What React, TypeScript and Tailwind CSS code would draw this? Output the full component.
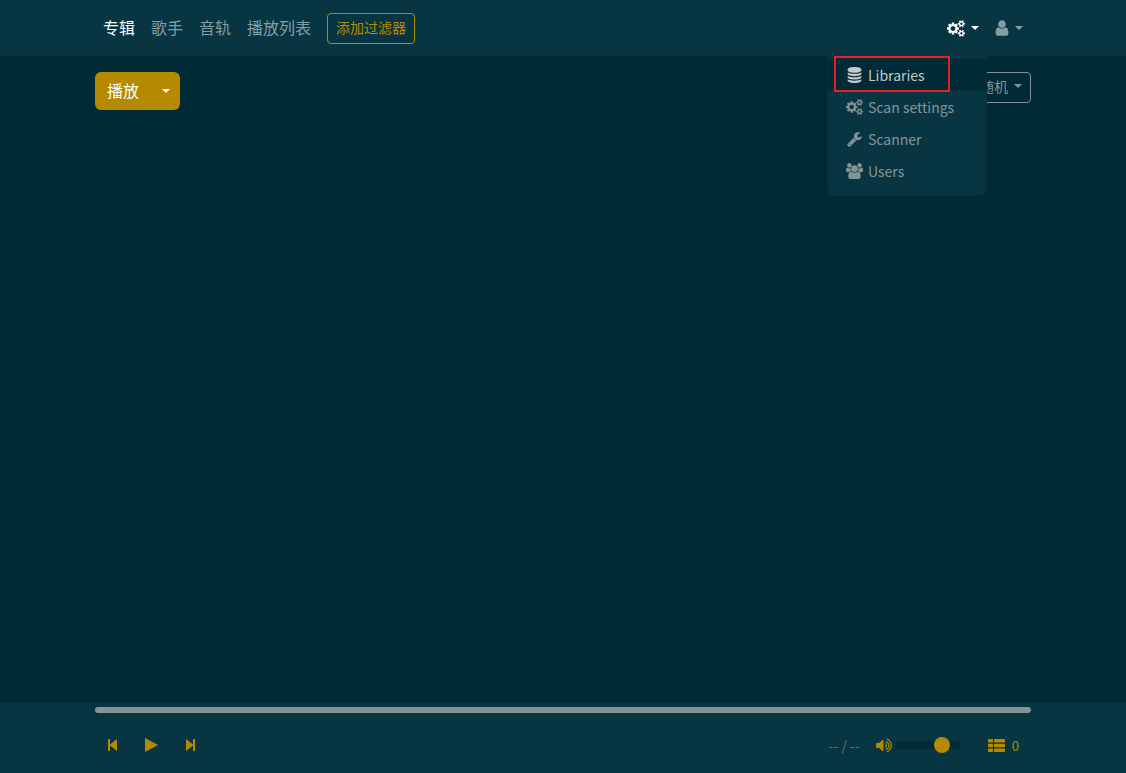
import React from "react";

type IconProps = { className?: string };

const COGS =
  "M896 896q0-106-75-181t-181-75-181 75-75 181 75 181 181 75 181-75 75-181zm768 512q0-52-38-90t-90-38-90 38-38 90q0 53 37.5 90.5t90.5 37.5 90.5-37.5 37.5-90.5zm0-1024q0-52-38-90t-90-38-90 38-38 90q0 53 37.5 90.5t90.5 37.5 90.5-37.5 37.5-90.5zm-384 421v185q0 10-7 19.5t-16 10.5l-155 24q-11 35-32 76 34 48 90 115 7 11 7 20 0 12-7 19-23 30-82.5 89.5t-78.5 59.5q-11 0-21-7l-115-90q-37 19-77 31-11 108-23 155-7 24-30 24h-186q-11 0-20-7.5t-10-17.5l-23-153q-34-10-75-31l-118 89q-7 7-20 7-11 0-21-8-144-133-144-160 0-9 7-19 10-14 41-53t47-61q-23-44-35-82l-152-24q-10-1-17-9.5t-7-19.5v-185q0-10 7-19.5t16-10.5l155-24q11-35 32-76-34-48-90-115-7-11-7-20 0-12 7-20 22-30 82-89t79-59q11 0 21 7l115 90q34-18 77-32 11-108 23-154 7-24 30-24h186q11 0 20 7.5t10 17.5l23 153q34 10 75 31l118-89q8-7 20-7 11 0 21 8 144 133 144 160 0 8-7 19-12 16-42 54t-45 60q23 48 34 82l152 23q10 2 17 10.5t7 19.5zm640 533v140q0 16-149 31-12 27-30 52 51 113 51 138 0 4-4 7-122 71-124 71-8 0-46-47t-52-68q-20 2-30 2t-30-2q-14 21-52 68t-46 47q-2 0-124-71-4-3-4-7 0-25 51-138-18-25-30-52-149-15-149-31v-140q0-16 149-31 13-29 30-52-51-113-51-138 0-4 4-7 4-2 35-20t59-34 30-16q8 0 46 46.5t52 67.5q20-2 30-2t30 2q51-71 92-112l6-2q4 0 124 70 4 3 4 7 0 25-51 138 17 23 30 52 149 15 149 31zm0-1024v140q0 16-149 31-12 27-30 52 51 113 51 138 0 4-4 7-122 71-124 71-8 0-46-47t-52-68q-20 2-30 2t-30-2q-14 21-52 68t-46 47q-2 0-124-71-4-3-4-7 0-25 51-138-18-25-30-52-149-15-149-31v-140q0-16 149-31 13-29 30-52-51-113-51-138 0-4 4-7 4-2 35-20t59-34 30-16q8 0 46 46.5t52 67.5q20-2 30-2t30 2q51-71 92-112l6-2q4 0 124 70 4 3 4 7 0 25-51 138 17 23 30 52 149 15 149 31z";
const DATABASE =
  "M768 768q237 0 443-43t325-127v170q0 69-103 128t-280 93.5-385 34.5-385-34.5-280-93.5-103-128v-170q119 84 325 127t443 43zm0 768q237 0 443-43t325-127v170q0 69-103 128t-280 93.5-385 34.5-385-34.5-280-93.5-103-128v-170q119 84 325 127t443 43zm0-384q237 0 443-43t325-127v170q0 69-103 128t-280 93.5-385 34.5-385-34.5-280-93.5-103-128v-170q119 84 325 127t443 43zm0-1152q208 0 385 34.5t280 93.5 103 128v128q0 69-103 128t-280 93.5-385 34.5-385-34.5-280-93.5-103-128v-128q0-69 103-128t280-93.5 385-34.5z";
const WRENCH =
  "M448 1472q0-26-19-45t-45-19-45 19-19 45 19 45 45 19 45-19 19-45zm644-420l-682 682q-37 37-90 37-52 0-91-37l-106-108q-38-36-38-90 0-53 38-91l681-681q39 98 114.5 173.5t173.5 114.5zm634-435q0 39-23 106-47 134-164.5 217.5t-258.5 83.5q-185 0-316.5-131.5t-131.5-316.5 131.5-316.5 316.5-131.5q58 0 121.5 16.5t107.5 46.5q16 11 16 28t-16 28l-293 169v224l193 107q5-3 79-48.5t135.5-81 70.5-35.5q15 0 23.5 10t8.5 25z";
const USERS =
  "M657 896q-162 5-265 128h-134q-82 0-138-40.5t-56-118.5q0-353 124-353 6 0 43.5 21t97.5 42.5 119 21.5q67 0 133-23-5 37-5 66 0 159 93 256zm1071 637q0 120-73 189.5t-194 69.5h-874q-121 0-194-69.5t-73-189.5q0-53 3.5-103.5t14-109 26.5-108.5 43-97.5 62-81 85.5-53.5 111.5-20q10 0 43 21.5t73 48 107 48 135 21.5 135-21.5 107-48 73-48 43-21.5q61 0 111.5 20t85.5 53.5 62 81 43 97.5 26.5 108.5 14 109 3.5 103.5zm-1024-1277q0 106-75 181t-181 75-181-75-75-181 75-181 181-75 181 75 75 181zm704 384q0 159-112.5 271.5t-271.5 112.5-271.5-112.5-112.5-271.5 112.5-271.5 271.5-112.5 271.5 112.5 112.5 271.5zm576 225q0 78-56 118.5t-138 40.5h-134q-103-123-265-128 93-97 93-256 0-29-5-66 66 23 133 23 59 0 119-21.5t97.5-42.5 43.5-21q124 0 124 353zm-128-609q0 106-75 181t-181 75-181-75-75-181 75-181 181-75 181 75 75 181z";
const USER =
  "M1536 1399q0 109-62.5 187t-150.5 78h-854q-88 0-150.5-78t-62.5-187q0-85 8.5-160.5t31.5-152 58.5-131 94-89 134.5-34.5q131 128 313 128t313-128q76 0 134.5 34.5t94 89 58.5 131 31.5 152 8.5 160.5zm-256-887q0 159-112.5 271.5t-271.5 112.5-271.5-112.5-112.5-271.5 112.5-271.5 271.5-112.5 271.5 112.5 112.5 271.5z";
const VOLUME =
  "M832 352v1088q0 26-19 45t-45 19-45-19l-333-333h-262q-26 0-45-19t-19-45v-384q0-26 19-45t45-19h262l333-333q19-19 45-19t45 19 19 45zm384 544q0 76-42.5 141.5t-112.5 93.5q-10 5-25 5-26 0-45-18.5t-19-45.5q0-21 12-35.5t29-25 34-23 29-35.5 12-57-12-57-29-35.5-34-23-29-25-12-35.5q0-27 19-45.5t45-18.5q15 0 25 5 70 27 112.5 93t42.5 142zm256 0q0 153-85 282.5t-225 188.5q-13 5-25 5-27 0-46-19t-19-45q0-39 39-59 56-29 76-44 74-54 115.5-135.5t41.5-173.5-41.5-173.5-115.5-135.5q-20-15-76-44-39-20-39-59 0-26 19-45t45-19q13 0 26 5 140 59 225 188.5t85 282.5zm256 0q0 230-127 422.5t-338 283.5q-13 5-26 5-26 0-45-19t-19-45q0-36 39-59 7-4 22.5-10.5t22.5-10.5q46-25 82-51 123-91 192-227t69-289-69-289-192-227q-36-26-82-51-7-4-22.5-10.5t-22.5-10.5q-39-23-39-59 0-26 19-45t45-19q13 0 26 5 211 91 338 283.5t127 422.5z";

function Glyph({ d, viewBox, className = "" }: { d: string; viewBox: string } & IconProps) {
  return (
    <svg viewBox={viewBox} fill="currentColor" aria-hidden="true" className={`shrink-0 ${className}`}>
      <path d={d} />
    </svg>
  );
}

function Caret() {
  return (
    <svg viewBox="0 0 8 4" fill="currentColor" aria-hidden="true" className="h-1 w-2 shrink-0">
      <path d="M0 0h8L4 4z" />
    </svg>
  );
}

const navItems = ["专辑", "歌手", "音轨", "播放列表"];

const adminItems = [
  { label: "Libraries", d: DATABASE, viewBox: "0 0 1536 1792", size: "h-4 w-[15px]" },
  { label: "Scan settings", d: COGS, viewBox: "0 0 1920 1792", size: "h-4 w-[17px]" },
  { label: "Scanner", d: WRENCH, viewBox: "64 0 1664 1792", size: "h-4 w-[15px]" },
  { label: "Users", d: USERS, viewBox: "64 0 1920 1792", size: "h-4 w-[17px]" },
];

function AdminMenu() {
  return (
    <div className="absolute right-px top-full z-10 w-[158px] rounded-md bg-[#073642] py-2 text-[#839496] ring-1 ring-[#05303b]">
      <ul>
        {adminItems.map((item, i) => (
          <li key={item.label}>
            <a
              href="#"
              className={`flex h-8 items-center gap-1 pl-4 text-sm ${i === 0 ? "bg-[#002b36] text-[#c1c9ca]" : ""}`}
            >
              <span className="flex w-5 justify-center">
                <Glyph d={item.d} viewBox={item.viewBox} className={item.size} />
              </span>
              {item.label}
            </a>
          </li>
        ))}
      </ul>
      <div className="pointer-events-none absolute left-1.5 top-[5px] h-9 w-[116px] border-2 border-[#ed1c24]" />
    </div>
  );
}

function Header() {
  return (
    <header className="bg-[#073642]">
      <div className="mx-auto flex h-14 max-w-[960px] items-center justify-between px-3">
        <nav className="flex items-center text-base">
          {navItems.map((item, i) => (
            <a key={item} href="#" className={`px-2 pb-0.5 ${i === 0 ? "text-white" : "text-[#839fa5]"}`}>
              {item}
            </a>
          ))}
          <button
            type="button"
            className="ml-2 h-[31px] rounded border border-[#b58900] px-2 pb-0.5 text-sm text-[#b58900]"
          >
            添加过滤器
          </button>
        </nav>
        <div className="flex items-center">
          <div className="relative">
            <button type="button" aria-label="Administration" className="flex h-[46px] items-center gap-1.5 px-2 text-white">
              <Glyph d={COGS} viewBox="0 0 1920 1792" className="h-[17px] w-[18px]" />
              <Caret />
            </button>
            <AdminMenu />
          </div>
          <button type="button" aria-label="Account" className="flex h-10 items-center gap-1.5 px-2 text-[#839fa5]">
            <Glyph d={USER} viewBox="256 0 1280 1792" className="h-[18px] w-[14px]" />
            <Caret />
          </button>
        </div>
      </div>
    </header>
  );
}

function Toolbar() {
  return (
    <div className="flex items-start justify-between">
      <div className="flex h-[38px] overflow-hidden rounded-md bg-[#b58900] text-white">
        <button type="button" className="px-3 pb-0.5 text-base">
          播放
        </button>
        <button type="button" aria-label="更多播放选项" className="pl-[11px] pr-[10px]">
          <Caret />
        </button>
      </div>
      <button
        type="button"
        className="flex h-[31px] items-center gap-1.5 rounded border border-[#839496] px-2 text-sm text-[#839496]"
      >
        <span className="pb-1">随机</span>
        <span className="pb-1">
          <Caret />
        </span>
      </button>
    </div>
  );
}

function Player() {
  return (
    <footer className="bg-[#073642]">
      <div className="mx-auto max-w-[960px] px-3 pt-1">
        <input
          type="range"
          aria-label="Seek"
          defaultValue={0}
          disabled
          className="block h-1.5 w-full appearance-none rounded-full bg-[#839496] [&::-webkit-slider-thumb]:h-0 [&::-webkit-slider-thumb]:w-0 [&::-webkit-slider-thumb]:appearance-none"
        />
        <div className="flex h-[60px] items-center justify-between px-3 pt-1 text-[#b58900]">
          <div className="flex items-center">
            <button type="button" aria-label="Previous" className="w-7">
              <svg viewBox="-1 0 10 12" fill="currentColor" className="h-3 w-[10px]">
                <path d="M0 0h2v5.4L8.6.2Q9 0 9 .5v11q0 .5-.4.3L2 6.600V12H0z" />
              </svg>
            </button>
            <button type="button" aria-label="Play" className="w-10 pl-2.5">
              <svg viewBox="0 0 13 14" fill="currentColor" className="h-3.5 w-[13px]">
                <path d="M0 .5Q0-.1.5.2L12.600 6.700q.5.3 0 .6L.5 13.800Q0 14.100 0 13.500z" />
              </svg>
            </button>
            <button type="button" aria-label="Next" className="w-7 pl-2.5">
              <svg viewBox="-1 0 10 12" fill="currentColor" className="h-3 w-[10px]">
                <path d="M9 0H7v5.400L.4.200Q0 0 0 .5v11q0 .5.4.3L7 6.600V12h2z" />
              </svg>
            </button>
          </div>
          <div className="flex items-center">
            <span className="mr-4 text-sm text-[#5b757c]">-- / --</span>
            <button type="button" aria-label="Mute">
              <Glyph d={VOLUME} viewBox="64 0 1664 1792" className="h-[17px] w-4" />
            </button>
            <input
              type="range"
              aria-label="Volume"
              min={0}
              max={100}
              defaultValue={80}
              className="ml-1 h-2 w-16 appearance-none rounded-full bg-[#002b36] [&::-webkit-slider-thumb]:h-4 [&::-webkit-slider-thumb]:w-4 [&::-webkit-slider-thumb]:appearance-none [&::-webkit-slider-thumb]:rounded-full [&::-webkit-slider-thumb]:bg-[#b58900]"
            />
            <button type="button" aria-label="Queue" className="ml-7 flex items-center gap-[7px] text-[13px]">
              <svg viewBox="0 0 17 13" fill="currentColor" aria-hidden="true" className="h-[13px] w-[17px]">
                <rect x="0" y="0" width="5" height="3.5" rx=".6" />
                <rect x="6" y="0" width="11" height="3.5" rx=".6" />
                <rect x="0" y="4.7" width="5" height="3.5" rx=".6" />
                <rect x="6" y="4.7" width="11" height="3.5" rx=".6" />
                <rect x="0" y="9.4" width="5" height="3.5" rx=".6" />
                <rect x="6" y="9.4" width="11" height="3.5" rx=".6" />
              </svg>
              <span className="pt-0.5">0</span>
            </button>
          </div>
        </div>
      </div>
    </footer>
  );
}

export default function App() {
  return (
    <div className="flex min-h-screen flex-col bg-[#002b36] font-['Noto_Sans_CJK_SC',sans-serif]">
      <Header />
      <main className="mx-auto w-full max-w-[960px] flex-1 px-3 pt-4">
        <Toolbar />
      </main>
      <Player />
    </div>
  );
}
